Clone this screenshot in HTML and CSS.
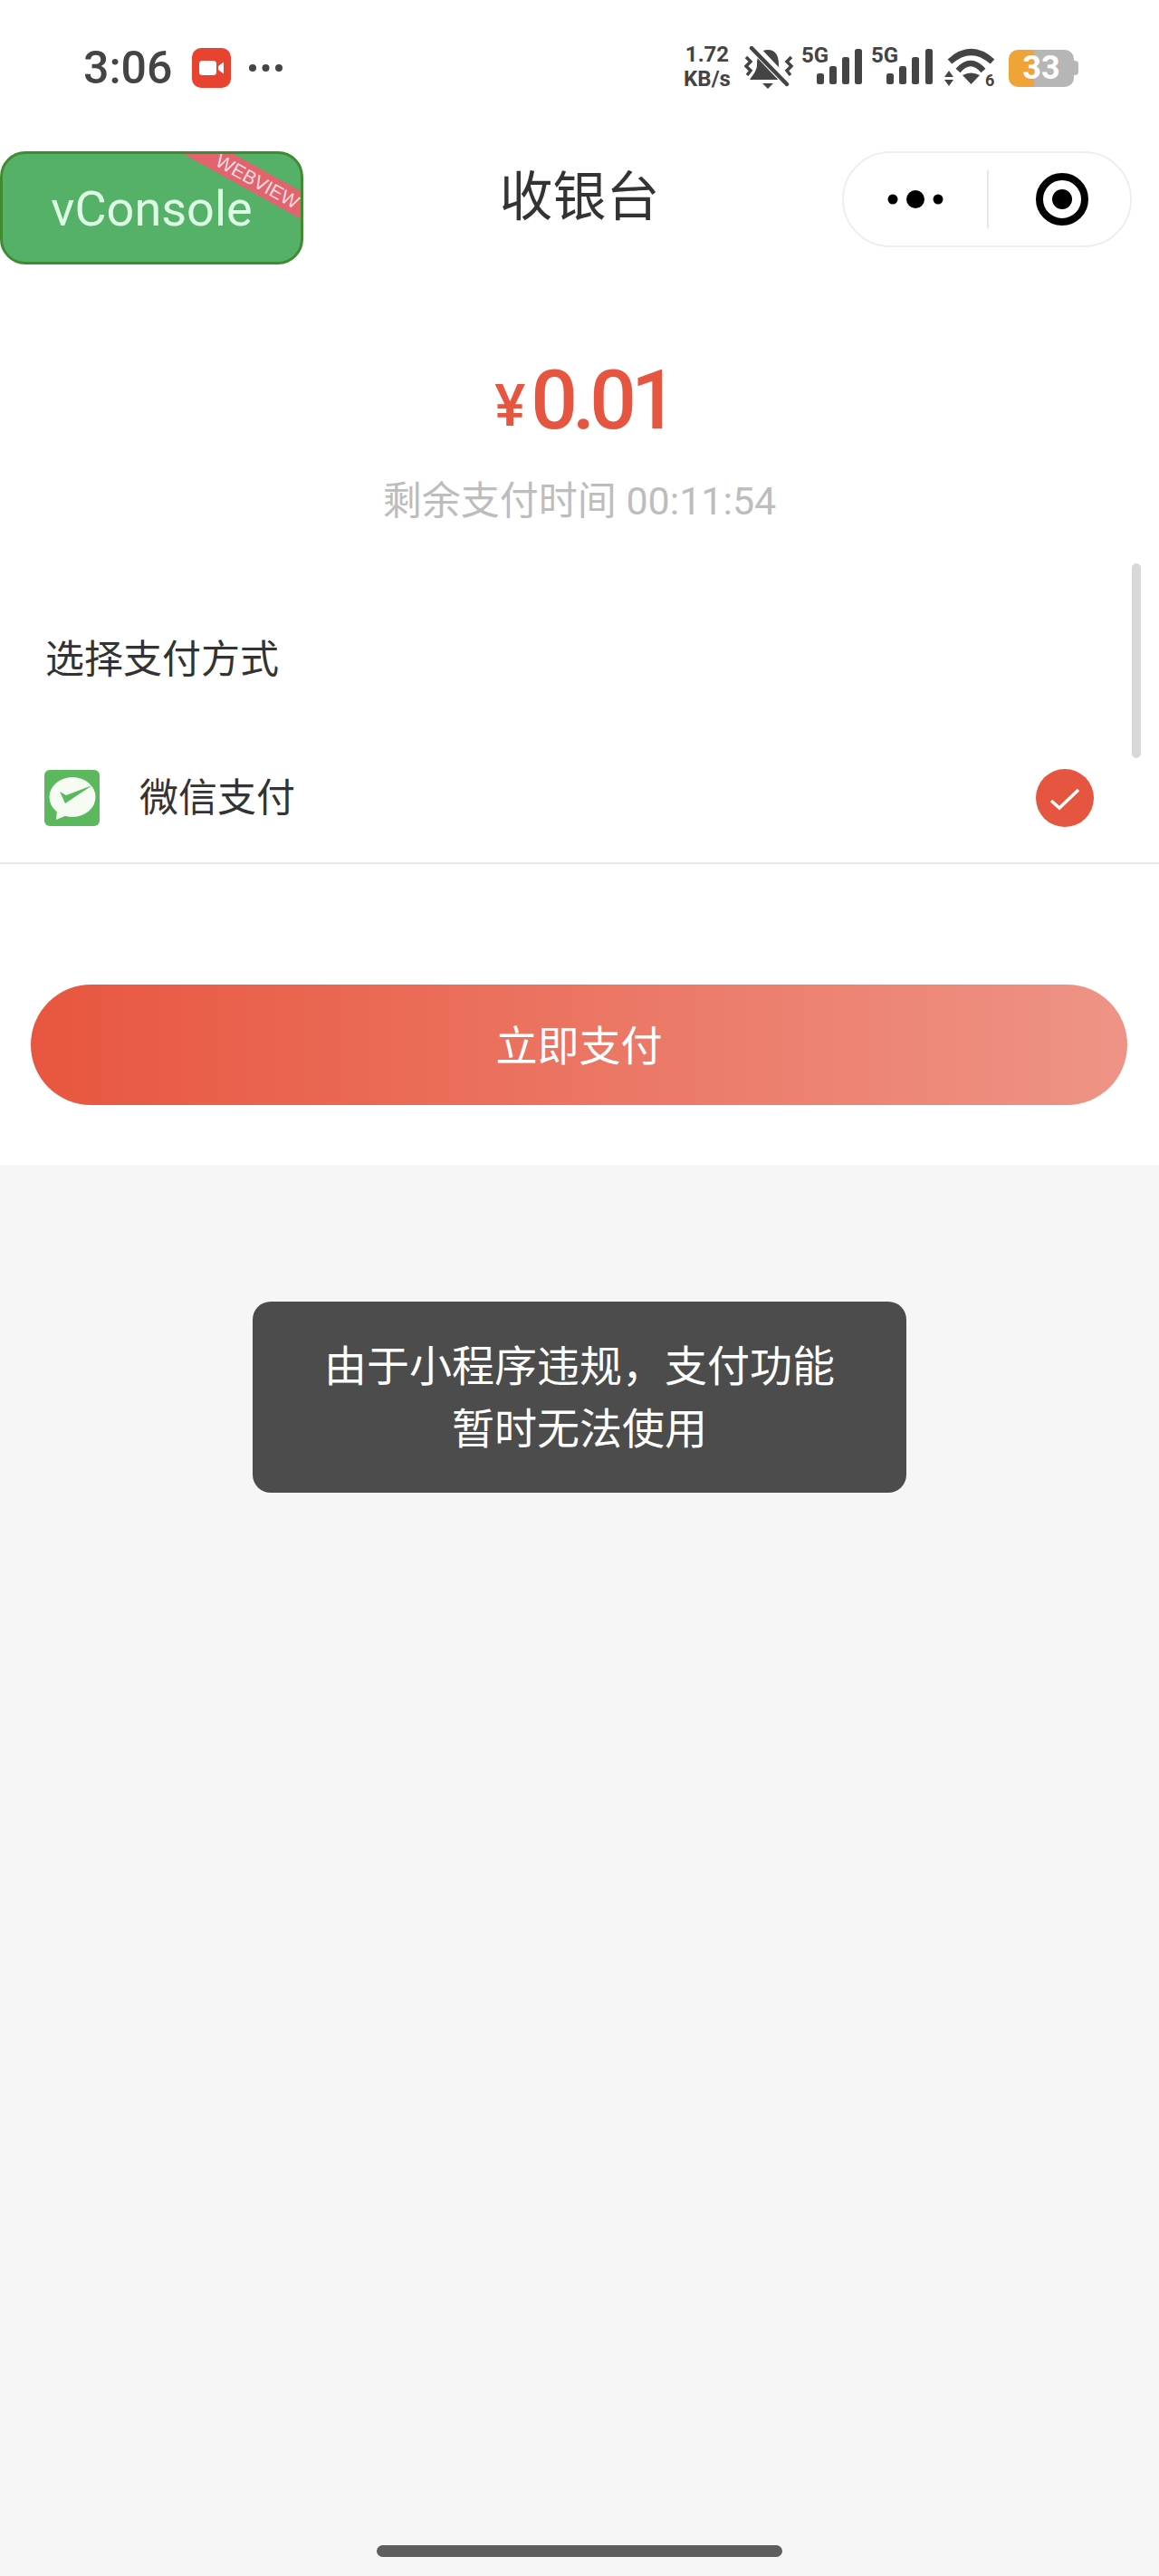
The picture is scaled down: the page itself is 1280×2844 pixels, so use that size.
FILE: index.html
```html
<!DOCTYPE html>
<html lang="zh-CN">

<head>
    <meta charset="UTF-8">
    <meta name="viewport" content="width=device-width, initial-scale=1.0">
    <title>收银台</title>
    <link rel="stylesheet" href="styles.css">
</head>

<body>
    <div class="page">
        <!-- status bar -->
        <div class="status-bar">
            <div class="status-left">
                <span class="time">3:06</span>
                <svg class="rec-icon" width="43" height="44" viewBox="0 0 43 44">
                    <rect width="43" height="44" rx="10" fill="#e8432e" />
                    <rect x="8" y="14" width="19" height="16" rx="3.5" fill="#fff" />
                    <path d="M29 20 L35 15.5 V28.5 L29 24 Z" fill="#fff" />
                </svg>
                <svg class="more-dots" width="37" height="8" viewBox="0 0 37 8">
                    <circle cx="4" cy="4" r="4" fill="#444" />
                    <circle cx="18.5" cy="4" r="4" fill="#444" />
                    <circle cx="33" cy="4" r="4" fill="#444" />
                </svg>
            </div>
            <div class="status-right">
                <div class="speed">
                    <span>1.72</span>
                    <span>KB/s</span>
                </div>
                <svg class="bell" width="55" height="48" viewBox="0 0 55 48">
                    <path d="M26 4 C17 4 14 11 14 20 C14 27 10 31 6 37 H45 C41 31 38 27 38 20 C38 11 35 4 26 4 Z" fill="#444" />
                    <path d="M20 41 H32 L26 47 Z" fill="#444" />
                    <path d="M10 1 L49 42" stroke="#fff" stroke-width="10" />
                    <path d="M8 2 L47 42" stroke="#444" stroke-width="4.5" stroke-linecap="round" />
                    <path d="M2 12 L7 17 L2 22 L7 27 L3 32" fill="none" stroke="#444" stroke-width="3.5" />
                    <path d="M52 12 L47 17 L52 22 L47 27 L51 32" fill="none" stroke="#444" stroke-width="3.5" />
                </svg>
                <svg class="signal" width="67" height="56" viewBox="0 0 67 56">
                    <text x="0" y="22" class="signal-text">5G</text>
                    <rect x="17" y="34" width="8" height="12" rx="2.5" fill="#444" />
                    <rect x="31" y="26" width="8" height="20" rx="2.5" fill="#444" />
                    <rect x="45" y="16" width="8" height="30" rx="2.5" fill="#444" />
                    <rect x="59" y="7" width="8" height="39" rx="2.5" fill="#444" />
                </svg>
                <svg class="signal signal-second" width="68" height="56" viewBox="0 0 68 56">
                    <text x="0" y="22" class="signal-text">5G</text>
                    <rect x="17" y="34" width="8" height="12" rx="2.5" fill="#444" />
                    <rect x="31" y="26" width="8" height="20" rx="2.5" fill="#444" />
                    <rect x="45" y="16" width="8" height="30" rx="2.5" fill="#444" />
                    <rect x="60" y="7" width="8" height="39" rx="2.5" fill="#444" />
                </svg>
                <svg class="wifi" width="57" height="56" viewBox="0 -7 57 56">
                    <path d="M6 14 Q29.5 -7 53 14" fill="none" stroke="#444" stroke-width="7" />
                    <path d="M15 24 Q29 8 43 24" fill="none" stroke="#444" stroke-width="6.5" />
                    <path d="M20 29 Q29.5 24 39 29 L29.5 39 Z" fill="#444" />
                    <path d="M5 24 L10 31 H0 Z" fill="#444" />
                    <path d="M5 41 L10 34 H0 Z" fill="#444" />
                    <text x="45" y="41" class="wifi-text">6</text>
                </svg>
                <div class="battery">
                    <div class="battery-body"><span>33</span></div>
                    <div class="battery-nub"></div>
                </div>
            </div>
        </div>

        <!-- nav -->
        <div class="nav">
            <div class="nav-left">
                <div class="vconsole">
                    vConsole
                    <div class="ribbon">WEBVIEW</div>
                </div>
            </div>
            <div class="nav-title">收银台</div>
            <div class="nav-right">
                <div class="capsule">
                    <div class="capsule-more">
                        <svg width="62" height="20" viewBox="0 0 62 20">
                            <circle cx="6" cy="10" r="5.5" fill="#000" />
                            <circle cx="31" cy="10" r="10" fill="#000" />
                            <circle cx="56" cy="10" r="5.5" fill="#000" />
                        </svg>
                    </div>
                    <div class="capsule-line"></div>
                    <div class="capsule-close">
                        <svg width="58" height="58" viewBox="0 0 58 58">
                            <circle cx="29" cy="29" r="25" fill="none" stroke="#000" stroke-width="8" />
                            <circle cx="29" cy="29" r="11" fill="#000" />
                        </svg>
                    </div>
                </div>
            </div>
        </div>

        <!-- order -->
        <div class="order">
            <div class="amount"><span class="yen">¥</span>0.01</div>
            <div class="countdown">剩余支付时间 00:11:54</div>
            <div class="method-title">选择支付方式</div>
            <div class="method-row">
                <svg class="wechat-icon" width="61" height="62" viewBox="0 0 61 62">
                    <rect width="61" height="62" rx="6" fill="#5cb85c" />
                    <ellipse cx="31" cy="30" rx="25.5" ry="22" fill="#f6fcf4" />
                    <path d="M14 44 L13 55 L25 50 Z" fill="#f6fcf4" />
                    <path d="M17 24 L24 28 L53 17 L23 37 Z" fill="#5cb85c" />
                </svg>
                <span class="method-name">微信支付</span>
                <svg class="check" width="64" height="64" viewBox="0 0 64 64">
                    <circle cx="32" cy="32" r="32" fill="#e5553f" />
                    <path d="M17 35 L26 43 L47 23" fill="none" stroke="#fff" stroke-width="3.5" />
                </svg>
            </div>
            <div class="pay-wrap">
                <button class="pay-btn">立即支付</button>
            </div>
            <div class="scroll-thumb"></div>
        </div>

        <div class="rest"></div>

        <div class="toast">由于小程序违规，支付功能暂时无法使用</div>
        <div class="home-bar"></div>
    </div>
</body>

</html>
```

FILE: styles.css
```css
body {
    margin: 0;
    font-family: Roboto, "Noto Sans CJK SC", sans-serif;
    color: #333;
    background-color: #f6f6f6;
}

.page {
    position: relative;
    display: flex;
    flex-direction: column;
    min-height: 100vh;
}

/* status bar */
.status-bar {
    display: flex;
    justify-content: space-between;
    align-items: center;
    box-sizing: border-box;
    height: 167px;
    padding: 0 89px 17px 92px;
    background-color: #fff;
}

.status-left,
.status-right {
    display: flex;
    align-items: center;
}

.time {
    font-size: 50px;
    font-weight: 500;
    color: #444;
    line-height: 50px;
}

.rec-icon {
    margin-left: 22px;
}

.more-dots {
    margin-left: 20px;
}

.speed {
    display: flex;
    flex-direction: column;
    align-items: center;
    width: 54px;
    margin-bottom: 3px;
    font-size: 24px;
    font-weight: 700;
    line-height: 27px;
    color: #444;
}

.bell {
    margin-left: 14px;
}

.signal {
    margin-left: 8px;
}

.signal-second {
    margin-left: 10px;
}

.signal-text {
    font-size: 24px;
    font-weight: 700;
    fill: #444;
}

.wifi {
    margin-left: 13px;
}

.wifi-text {
    font-size: 18px;
    font-weight: 700;
    fill: #444;
}

.battery {
    display: flex;
    align-items: center;
    margin-left: 14px;
}

.battery-body {
    display: flex;
    justify-content: center;
    align-items: center;
    width: 72px;
    height: 41px;
    border-radius: 10px;
    background: linear-gradient(to right, #f0a336 0, #f0a336 28px, #b6b6b6 28px);
    color: #fff;
    font-size: 36px;
    font-weight: 700;
    line-height: 41px;
}

.battery-nub {
    width: 5px;
    height: 16px;
    border-radius: 0 4px 4px 0;
    background-color: #b6b6b6;
}

/* nav */
.nav {
    display: grid;
    grid-template-columns: 1fr auto 1fr;
    height: 125px;
    background-color: #fff;
}

.vconsole {
    position: relative;
    box-sizing: border-box;
    width: 335px;
    height: 125px;
    border: 3px solid #3f8c30;
    border-radius: 28px;
    background-color: #55b168;
    color: #dcfce4;
    font-size: 54px;
    line-height: 122px;
    text-align: center;
    overflow: hidden;
}

.ribbon {
    position: absolute;
    top: 19px;
    right: -52px;
    box-sizing: border-box;
    width: 190px;
    height: 27px;
    padding-right: 10px;
    background-color: #e2646f;
    color: #fbdde0;
    font-family: "Liberation Sans", sans-serif;
    font-size: 21px;
    line-height: 27px;
    text-align: center;
    transform: rotate(29deg);
}

.nav-title {
    align-self: center;
    margin-bottom: 24px;
    font-size: 59px;
    line-height: 80px;
    color: #333;
}

.nav-right {
    display: flex;
    justify-content: flex-end;
    padding-right: 30px;
}

.capsule {
    display: flex;
    align-items: center;
    box-sizing: border-box;
    width: 320px;
    height: 106px;
    border: 2px solid #eee;
    border-radius: 53px;
    background-color: #fff;
}

.capsule-more,
.capsule-close {
    display: flex;
    justify-content: center;
    align-items: center;
}

.capsule-more {
    width: 158px;
}

.capsule-close {
    flex: 1;
    padding-left: 6px;
}

.capsule-line {
    width: 2px;
    height: 64px;
    background-color: #e8e8e8;
}

/* order */
.order {
    position: relative;
    background-color: #fff;
    padding-bottom: 66px;
}

.amount {
    margin-top: 100px;
    padding-left: 9px;
    font-size: 91px;
    font-weight: 500;
    letter-spacing: -6px;
    line-height: 100px;
    text-align: center;
    color: #e5553f;
}

.yen {
    margin-right: 6px;
    font-size: 64px;
    line-height: 1;
    letter-spacing: 0;
    vertical-align: 3px;
}

.countdown {
    margin-top: 31px;
    font-size: 43px;
    line-height: 60px;
    text-align: center;
    color: #bdbdbd;
}

.method-title {
    margin-top: 115px;
    padding-left: 50px;
    font-size: 43px;
    line-height: 60px;
    color: #333;
}

.method-row {
    display: flex;
    align-items: center;
    height: 142px;
    margin-top: 52px;
    padding: 0 72px 0 49px;
    border-bottom: 2px solid #e8e8e8;
}

.method-name {
    flex: 1;
    margin-left: 44px;
    font-size: 43px;
    line-height: 60px;
    color: #333;
}

.pay-wrap {
    margin-top: 133px;
    padding: 0 35px 0 34px;
}

.pay-btn {
    display: block;
    width: 100%;
    height: 133px;
    padding: 0 0 6px;
    border: none;
    border-radius: 67px;
    background: linear-gradient(to right, #e8563f, #ee9486);
    color: #fff;
    font-family: inherit;
    font-size: 46px;
}

.scroll-thumb {
    position: absolute;
    top: 330px;
    right: 20px;
    width: 10px;
    height: 215px;
    border-radius: 5px;
    background-color: #d8d8d8;
}

.rest {
    flex: 1;
}

/* overlays */
.toast {
    position: absolute;
    top: 1437px;
    left: 279px;
    box-sizing: border-box;
    width: 722px;
    height: 211px;
    padding: 37px 70px;
    border-radius: 20px;
    background-color: #4c4c4c;
    color: #fff;
    font-size: 47px;
    line-height: 69px;
    text-align: center;
}

.home-bar {
    position: absolute;
    bottom: 21px;
    left: 416px;
    width: 448px;
    height: 13px;
    border-radius: 7px;
    background-color: #5e5e5e;
}
```
